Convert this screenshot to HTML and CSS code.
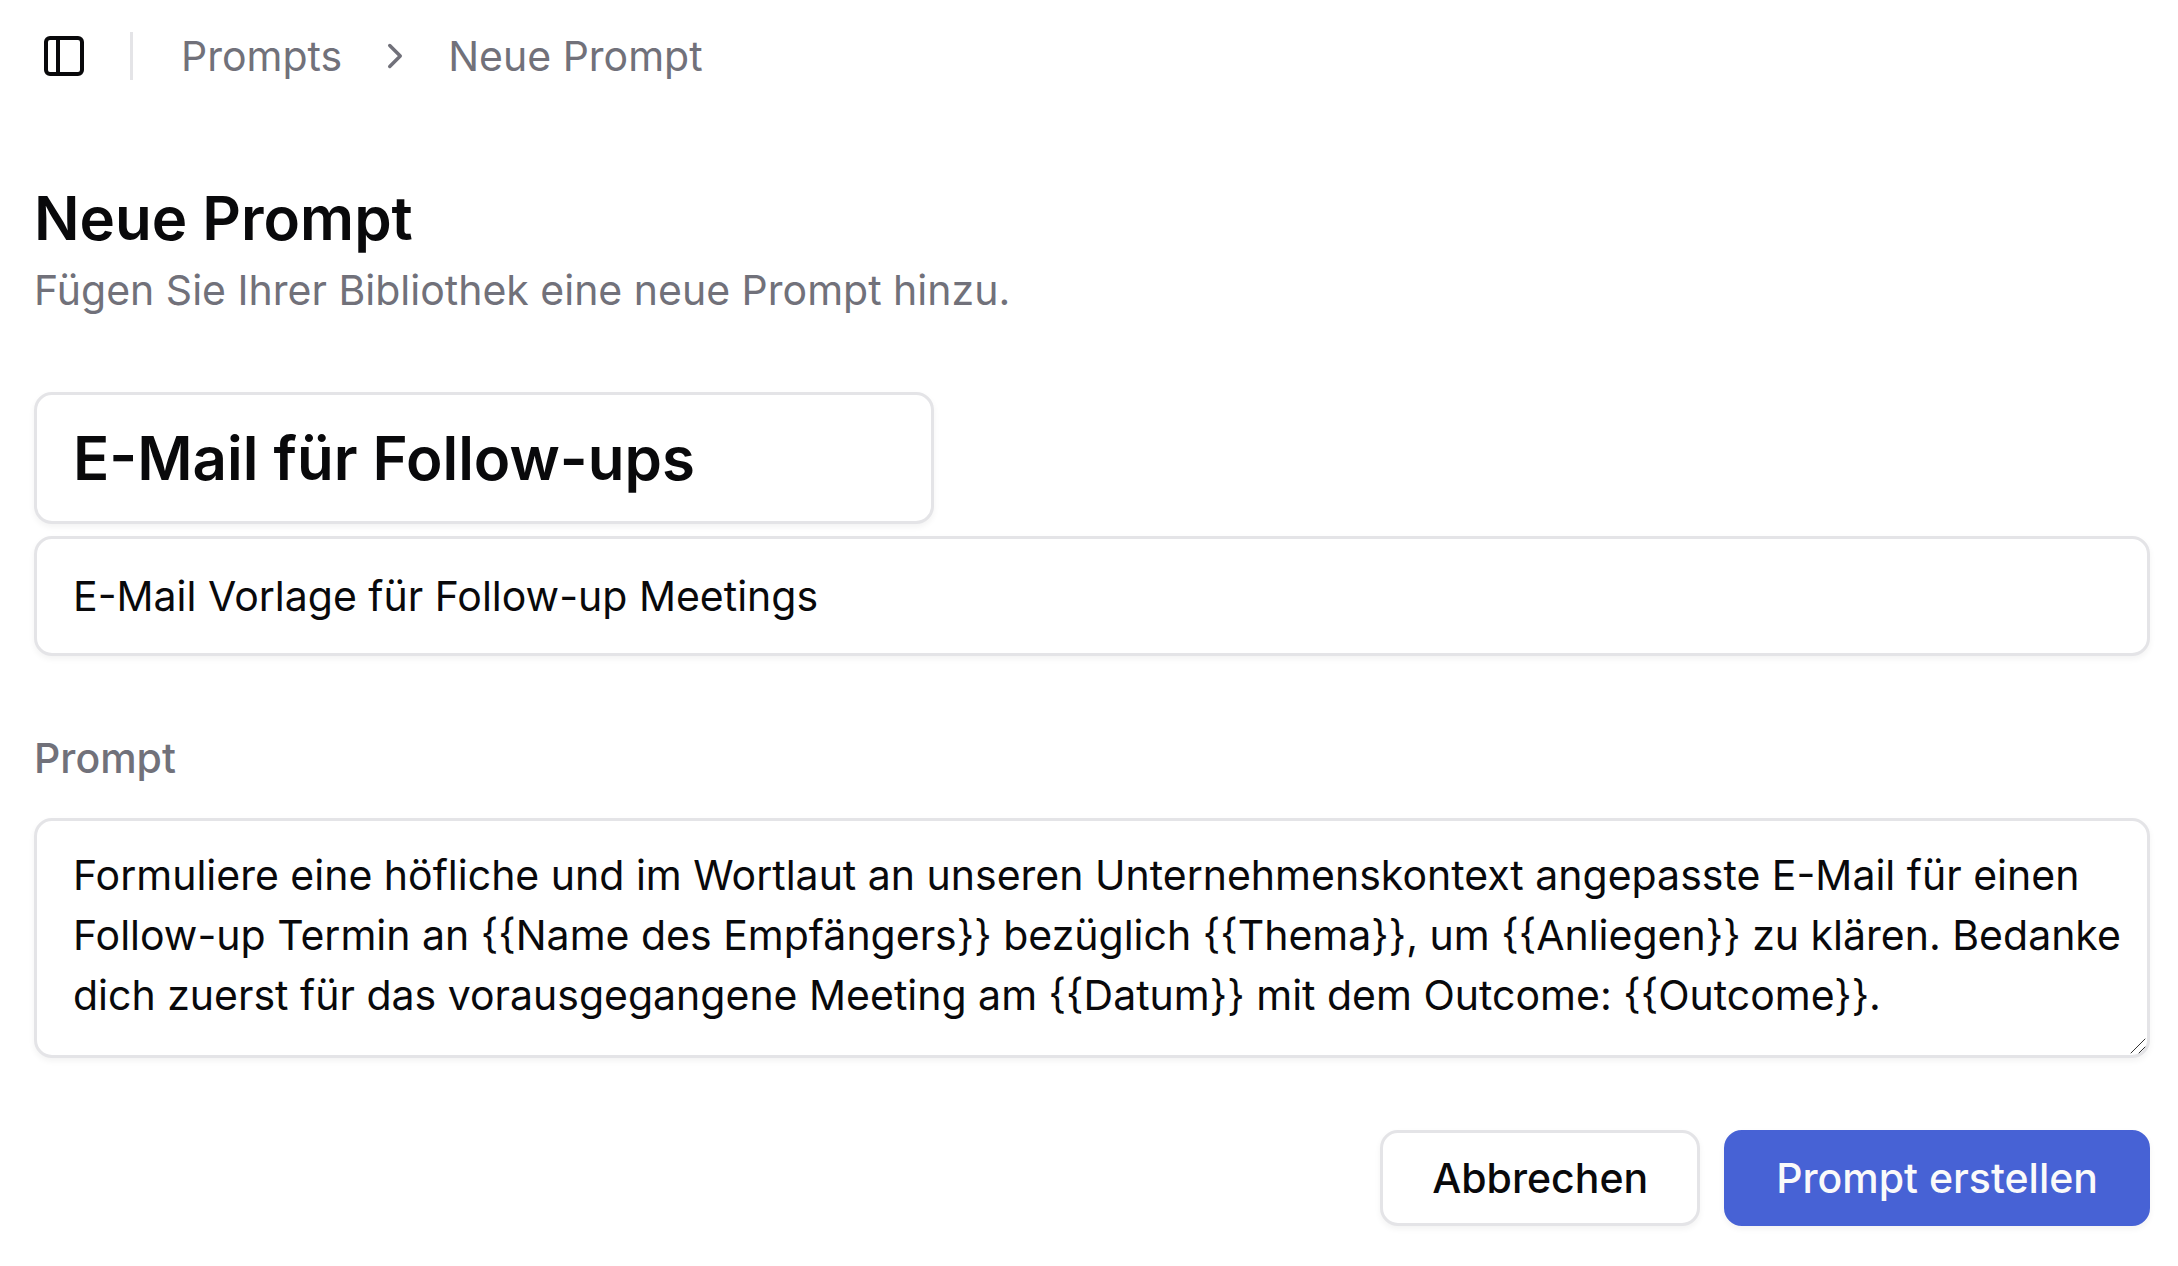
FILE: index.html
```html
<!DOCTYPE html>
<html lang="de">
<head>
    <meta charset="UTF-8">
    <meta name="viewport" content="width=device-width, initial-scale=1.0">
    <title>Neue Prompt</title>
    <link rel="stylesheet" href="styles.css">
</head>
<body>
    <header class="topbar">
        <button type="button" class="sidebar-toggle" aria-label="Seitenleiste umschalten">
            <svg viewBox="0 0 24 24" width="48" height="48">
                <rect x="3" y="3" width="18" height="18" rx="2"/>
                <path d="M9 3v18"/>
            </svg>
        </button>
        <div class="divider"></div>
        <nav class="breadcrumb" aria-label="Breadcrumb">
            <a href="#">Prompts</a>
            <svg viewBox="0 0 24 24" width="42" height="42" aria-hidden="true">
                <path d="m9 18 6-6-6-6"/>
            </svg>
            <a href="#" aria-current="page">Neue Prompt</a>
        </nav>
    </header>

    <main>
        <h1>Neue Prompt</h1>
        <p class="description">Fügen Sie Ihrer Bibliothek eine neue Prompt hinzu.</p>

        <form id="prompt-form">
            <div class="details">
                <input type="text" id="prompt-title" class="title-input" aria-label="Titel" value="E-Mail für Follow-ups">
                <input type="text" id="prompt-description" aria-label="Beschreibung" value="E-Mail Vorlage für Follow-up Meetings">
            </div>
            <div class="field">
                <label for="prompt-text">Prompt</label>
                <div class="textarea-wrap">
                    <textarea id="prompt-text" rows="3" spellcheck="false">Formuliere eine höfliche und im Wortlaut an unseren Unternehmenskontext angepasste E-Mail für einen Follow-up Termin an {{Name des Empfängers}} bezüglich {{Thema}}, um {{Anliegen}} zu klären. Bedanke dich zuerst für das vorausgegangene Meeting am {{Datum}} mit dem Outcome: {{Outcome}}.</textarea>
                    <svg class="grip" viewBox="0 0 16 16" width="16" height="16" aria-hidden="true">
                        <path d="M1 15 15 1M9 15l6-6"/>
                    </svg>
                </div>
            </div>
            <div class="actions">
                <button type="button" class="btn">Abbrechen</button>
                <button type="submit" class="btn btn-primary">Prompt erstellen</button>
            </div>
        </form>
    </main>
</body>
</html>
```
FILE: styles.css
```css
* {
    box-sizing: border-box;
}

body {
    margin: 0;
    background-color: #fff;
    color: #09090b;
    font-family: Inter, "Liberation Sans", sans-serif;
    font-size: 41px;
    line-height: 60px;
}

svg {
    display: block;
    flex-shrink: 0;
    fill: none;
    stroke: currentColor;
    stroke-width: 2;
    stroke-linecap: round;
    stroke-linejoin: round;
}

.topbar {
    display: flex;
    align-items: center;
    height: 112px;
    padding: 0 40px;
}

.sidebar-toggle {
    padding: 0;
    border: none;
    background: none;
    color: inherit;
    cursor: pointer;
}

.divider {
    width: 3px;
    height: 48px;
    margin: 0 48px 0 42px;
    background-color: #e4e4e7;
}

.breadcrumb {
    display: flex;
    align-items: center;
    gap: 32px;
    color: #71717a;
}

.breadcrumb a {
    color: inherit;
    text-decoration: none;
}

main {
    padding: 64px 28px 40px 34px;
}

h1 {
    margin: 0;
    font-size: 60px;
    font-weight: 600;
    line-height: 84px;
}

.description {
    margin: 0;
    color: #71717a;
}

form {
    display: flex;
    flex-direction: column;
    gap: 72px;
    margin-top: 72px;
}

.details {
    display: flex;
    flex-direction: column;
    gap: 12px;
}

input,
textarea {
    display: block;
    width: 100%;
    border: 3px solid #e4e4e7;
    border-radius: 18px;
    background-color: #fff;
    box-shadow: 0 3px 6px rgba(0, 0, 0, 0.05);
    color: inherit;
    font: inherit;
    outline: none;
}

input {
    height: 120px;
    padding: 0 36px;
}

.title-input {
    max-width: 900px;
    height: 132px;
    font-size: 60px;
    font-weight: 600;
}

.field {
    display: flex;
    flex-direction: column;
    gap: 30px;
}

label {
    color: #71717a;
    font-weight: 500;
}

.textarea-wrap {
    position: relative;
}

textarea {
    height: 240px;
    padding: 24px 18px 24px 36px;
    resize: none;
    overflow: hidden;
}

.grip {
    position: absolute;
    right: 4px;
    bottom: 4px;
    color: #333;
    stroke-width: 1;
}

.actions {
    display: flex;
    justify-content: flex-end;
    gap: 24px;
}

.btn {
    height: 96px;
    padding: 0 49px;
    border: 3px solid #e4e4e7;
    border-radius: 18px;
    background-color: #fff;
    box-shadow: 0 3px 6px rgba(0, 0, 0, 0.05);
    color: inherit;
    font: inherit;
    font-weight: 500;
    cursor: pointer;
}

.btn-primary {
    border-color: #4762d5;
    background-color: #4762d5;
    color: #fafafa;
}
```
